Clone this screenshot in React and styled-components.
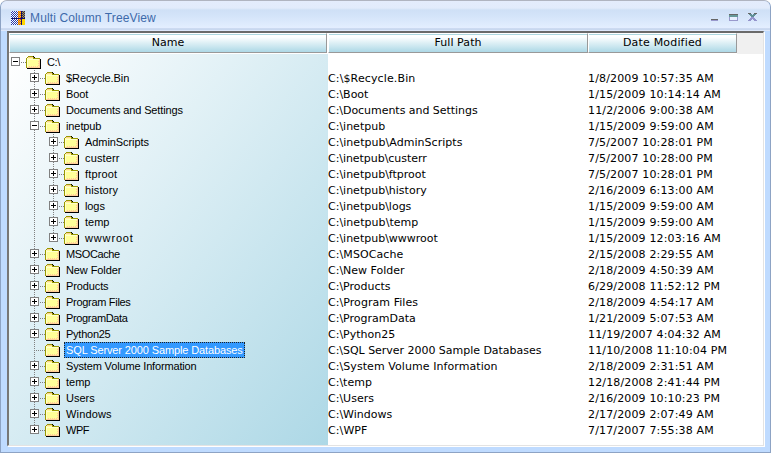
import React from 'react';
import styled, { createGlobalStyle } from 'styled-components';

const GlobalStyle = createGlobalStyle`
  * { box-sizing: border-box; }
  html, body { margin: 0; background: #fff; }
  body { width: 771px; height: 453px; overflow: hidden; }
`;

const Window = styled.div`
  width: 771px;
  height: 453px;
  display: flex;
  flex-direction: column;
  padding: 0 5px 5px;
  border: 1px solid;
  border-color: #b0b4c0 #8da3c4 #8da3c4 #8da3c4;
  border-radius: 7px 7px 0 0;
  background: #bfdbff;
  overflow: hidden;
`;

const TitleBar = styled.header`
  height: 30px;
  flex: none;
  margin: 0 -5px;
  padding: 3px 13px 0 10px;
  display: flex;
  align-items: center;
  background: linear-gradient(#e4ecfc 0, #e2ebfb 7px, #cfe0f6 9px, #d4e4f9 15px, #e2eeff 26px, #e4edff 27px, #b4c8e4 28px, #dde8fb 29px);
`;

const Title = styled.h1`
  flex: 1;
  margin: 0 0 0 5px;
  font: 12px/16px "Liberation Sans", Arial, sans-serif;
  letter-spacing: 0.13px;
  color: #3e6aaa;
`;

const Controls = styled.div`
  display: flex;
  gap: 10px;
`;

const Panel = styled.main`
  flex: 1;
  min-height: 0;
  margin: 0 1px 1px;
  border: solid;
  border-width: 2px 1px 1px 2px;
  border-color: #6a6a6a #e3e3e3 #e3e3e3 #777;
  box-shadow: 1px 1px 0 #fff;
  background: #fff;
  overflow: hidden;
`;

const HeaderRow = styled.div`
  display: grid;
  grid-template-columns: 318px 261px 149px 1fr;
  height: 21px;
  background: linear-gradient(#f0f0f0, #f0f0f0) right top / 26px 21px no-repeat;
`;

const HeaderCell = styled.div`
  height: 20px;
  margin-left: ${p => (p.$inset ? 1 : 0)}px;
  border: 1px solid #fff;
  border-right-color: #999;
  border-bottom-color: #999;
  text-align: center;
  font: 11px/18px "DejaVu Sans", Verdana, sans-serif;
  letter-spacing: ${p => p.$ls || 0}px;
  color: #000;
  background: linear-gradient(#add8e0 0, #add8e0 1px, #fff 1px, #fdffff 3px, #add8e6 100%);
`;

const Body = styled.div`
  display: grid;
  grid-template-columns: 319px 260px 1fr;
  height: 391px;
`;

const TreePane = styled.div`
  background: linear-gradient(to bottom right, #fff, #add8e6);
`;

const TreeRow = styled.div`
  display: flex;
  height: 16px;
`;

const Label = styled.span`
  height: 16px;
  margin-left: 3px;
  padding: 0 2px;
  font: 11px/16px "Liberation Sans", Arial, sans-serif;
  letter-spacing: ${p => p.$ls}px;
  white-space: pre;
  color: ${p => (p.$selected ? '#fff' : '#000')};
  background: ${p => (p.$selected ? '#3399ff' : 'transparent')};
  outline: ${p => (p.$selected ? '1px dotted #222' : 'none')};
  outline-offset: -1px;
`;

const TextColumn = styled.div`
  padding-top: 17px;
`;

const TextCell = styled.div`
  height: 16px;
  font: 11px/16px "DejaVu Sans", Verdana, sans-serif;
  letter-spacing: ${p => p.$ls}px;
  white-space: pre;
  color: #000;
`;

const Svg = styled.svg`
  display: block;
  flex: none;
  shape-rendering: crispEdges;
`;

// Connector lines and the expand box that precede one row's folder.
function Branch({ level, state, tail }) {
  const box = 3 + level * 19;
  const mid = box + 3;
  return (
    <Svg width={17 + level * 19} height="16">
      <g stroke="#808080" strokeDasharray="1 1">
        {level === 2 && <path d="M25.5 0v16" />}
        {level > 0 && <path d={`M${mid + 0.5} 0v${tail ? 8 : 16}`} />}
        <path d={`M${mid} 8.5h11`} />
      </g>
      {state && (
        <g>
          <rect x={box - 0.5} y="3.5" width="8" height="8" fill="#fff" stroke="#808080" />
          <path d={`M${box + 1} 7.5h5${state === '+' ? `M${box + 3.5} 5v5` : ''}`} stroke="#000" />
        </g>
      )}
    </Svg>
  );
}

function Folder() {
  return (
    <Svg width="16" height="16">
      <path d="M7 2h1v1h1v1h5v1h1v10H1v-1h13V5H8V4H7z" fill="#000" />
      <path d="M0 4h1V3h1V2h5v1h1v1h6v10H0z" fill="#999900" />
      <path d="M1 5h13v9H1zM2 3h5v2H2z" fill="#ffcc99" />
      <path d="M2 6h11v7H2zM2 4h5v1H2z" fill="#ffff99" />
      <path d="M1 4h1v9H1zM2 5h11v1H2z" fill="#ffffcc" />
      <path d="M3 12h1v1H3zM5 12h1v1H5zM7 12h1v1H7zM9 12h1v1H9zM11 12h1v1h-1zM12 11h1v1h-1zM12 9h1v1h-1zM12 7h1v1h-1z" fill="#ffcc99" />
    </Svg>
  );
}

function AppIcon() {
  const cells = [];
  for (let y = 0; y < 14; y++) {
    for (let x = 0; x < 14; x++) {
      const odd = (x + y) % 2;
      let c;
      if (x < 7) c = odd ? '#2438a8' : '#fff';
      else if (x < 11) c = odd ? '#e8442c' : '#ffe000';
      else c = odd ? '#202860' : '#b89848';
      if (x > 10 && y > 6) c = odd ? '#ffcc00' : '#ffe000';
      if (y === 7 || x === 10) c = '#101068';
      cells.push(<rect key={`${x}-${y}`} x={x} y={y} width="1" height="1" fill={c} />);
    }
  }
  return <Svg width="14" height="14">{cells}</Svg>;
}

// level, expander, name, path, date, label spacing, path spacing
const tree = [
  [0, '-', 'C:\\', null, null, -0.4],
  [1, '+', '$Recycle.Bin', 'C:\\$Recycle.Bin', '1/8/2009 10:57:35 AM', -0.08, 0.13],
  [1, '+', 'Boot', 'C:\\Boot', '1/15/2009 10:14:14 AM', -0.1, 0],
  [1, '+', 'Documents and Settings', 'C:\\Documents and Settings', '11/2/2006 9:00:38 AM', -0.14, -0.04],
  [1, '-', 'inetpub', 'C:\\inetpub', '1/15/2009 9:59:00 AM', -0.1, 0],
  [2, '+', 'AdminScripts', 'C:\\inetpub\\AdminScripts', '7/5/2007 10:28:01 PM', -0.08, 0.04],
  [2, '+', 'custerr', 'C:\\inetpub\\custerr', '7/5/2007 10:28:00 PM', 0.15, -0.05],
  [2, '+', 'ftproot', 'C:\\inetpub\\ftproot', '7/5/2007 10:28:01 PM', 0.15, 0],
  [2, '+', 'history', 'C:\\inetpub\\history', '2/16/2009 6:13:00 AM', 0.12, 0],
  [2, '+', 'logs', 'C:\\inetpub\\logs', '1/15/2009 9:59:00 AM', -0.1, 0],
  [2, '+', 'temp', 'C:\\inetpub\\temp', '1/15/2009 9:59:00 AM', 0, 0.05],
  [2, '+', 'wwwroot', 'C:\\inetpub\\wwwroot', '1/15/2009 12:03:16 AM', 0.85, 0],
  [1, '+', 'MSOCache', 'C:\\MSOCache', '2/15/2008 2:29:55 AM', -0.38, 0.08],
  [1, '+', 'New Folder', 'C:\\New Folder', '2/18/2009 4:50:39 AM', -0.1, 0],
  [1, '+', 'Products', 'C:\\Products', '6/29/2008 11:52:12 PM', -0.12, 0],
  [1, '+', 'Program Files', 'C:\\Program Files', '2/18/2009 4:54:17 AM', -0.3, 0.06],
  [1, '+', 'ProgramData', 'C:\\ProgramData', '1/21/2009 5:07:53 AM', -0.35, 0],
  [1, '+', 'Python25', 'C:\\Python25', '11/19/2007 4:04:32 AM', -0.25, 0],
  [1, '', 'SQL Server 2000 Sample Databases', 'C:\\SQL Server 2000 Sample Databases', '11/10/2008 11:10:04 PM', -0.12, -0.03],
  [1, '+', 'System Volume Information', 'C:\\System Volume Information', '2/18/2009 2:31:51 AM', -0.16, 0.07],
  [1, '+', 'temp', 'C:\\temp', '12/18/2008 2:41:44 PM', 0, 0],
  [1, '+', 'Users', 'C:\\Users', '2/16/2009 10:10:23 PM', 0, 0],
  [1, '+', 'Windows', 'C:\\Windows', '2/17/2009 2:07:49 AM', 0.15, 0],
  [1, '+', 'WPF', 'C:\\WPF', '7/17/2007 7:55:38 AM', -0.5, 0.1],
];

export default function App() {
  const files = tree.slice(1);
  return (
    <>
      <GlobalStyle />
      <Window>
        <TitleBar>
          <AppIcon />
          <Title>Multi Column TreeView</Title>
          <Controls>
            <Svg width="9" height="9"><path d="M1 6h7v1H1z" fill="#666" /><path d="M1 7h7v1H1z" fill="#99c" /></Svg>
            <Svg width="9" height="9">
              <path d="M0 1h9v7H0z" fill="#9999cc" />
              <path d="M1 4h7v3H1z" fill="#e8f0ff" />
              <path d="M0 1h9v1H0z" fill="#666" />
              <path d="M0 2h9v2H0z" fill="#669999" />
            </Svg>
            <Svg width="9" height="9">
              <path d="M0 0h3v1H0zM6 0h3v1H6z" fill="#666" />
              <path d="M1 1h3v1H1zM5 1h3v1H5zM2 2h5v1H2zM3 3h3v1H3z" fill="#5f8f95" />
              <path d="M3 4h3v1H3zM2 5h5v1H2zM1 6h3v1H1zM5 6h3v1H5zM0 7h3v1H0zM6 7h3v1H6z" fill="#9494cc" />
            </Svg>
          </Controls>
        </TitleBar>
        <Panel>
          <HeaderRow>
            <HeaderCell>Name</HeaderCell>
            <HeaderCell $inset $ls={0.08}>Full Path</HeaderCell>
            <HeaderCell $ls={0.18}>Date Modified</HeaderCell>
          </HeaderRow>
          <Body>
            <TreePane>
              {tree.map(([level, state, name, , , ls], i) => (
                <TreeRow key={i}>
                  <Branch level={level} state={state} tail={i === tree.length - 1 || i === 11} />
                  <Folder />
                  <Label $ls={ls} $selected={i === 18}>{name}</Label>
                </TreeRow>
              ))}
            </TreePane>
            <TextColumn>
              {files.map(([, , , path, , , ls], i) => <TextCell key={i} $ls={ls}>{path}</TextCell>)}
            </TextColumn>
            <TextColumn>
              {files.map(([, , , , date], i) => <TextCell key={i} $ls={0.15}>{date}</TextCell>)}
            </TextColumn>
          </Body>
        </Panel>
      </Window>
    </>
  );
}
